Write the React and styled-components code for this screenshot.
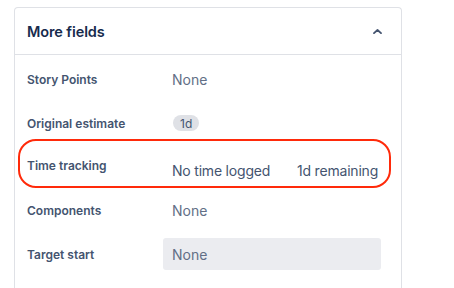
import React from "react";
import styled, { createGlobalStyle } from "styled-components";

const Global = createGlobalStyle`
  html, body { margin: 0; padding: 0; background: #ffffff; }
  body { font-family: Inter, "Noto Sans", "Liberation Sans", sans-serif; -webkit-font-smoothing: antialiased; }
`;

const Page = styled.div`
  padding: 7px 0 0 14px;
  height: 288px;
  box-sizing: border-box;
  overflow: hidden;
`;

const Card = styled.section`
  width: 388px;
  height: 300px;
  box-sizing: border-box;
  border: 1px solid #dfe1e6;
  border-bottom: none;
  border-radius: 4px 4px 0 0;
`;

const Header = styled.header`
  height: 46px;
  display: flex;
  align-items: center;
  justify-content: space-between;
  padding: 0 19px 0 12px;
  border-bottom: 1px solid #dfe1e6;
`;

const Title = styled.h2`
  margin: 0;
  font-size: 14.5px;
  font-weight: 600;
  color: #172b4d;
  letter-spacing: -0.1px;
`;

const Body = styled.div`
  display: flex;
  flex-direction: column;
  gap: 12px;
  padding: 8px 20px 0 12px;
`;

const Row = styled.div`
  position: relative;
  display: grid;
  grid-template-columns: 136px 218px;
  align-items: center;
  height: ${(p) => p.$h || 32}px;
`;

const Label = styled.div`
  font-size: 12px;
  font-weight: 600;
  color: #44546f;
  white-space: nowrap;
  align-self: ${(p) => (p.$top ? "start" : "center")};
  padding-top: ${(p) => (p.$top ? "7px" : "0")};
`;

const Value = styled.div`
  display: flex;
  align-items: center;
  padding-left: 9px;
  font-size: 14px;
  white-space: nowrap;
  color: ${(p) => (p.$muted ? "#626f86" : "#44546f")};
  height: 32px;
  box-sizing: border-box;
  border-radius: 3px;
  background: ${(p) => (p.$field ? "#ebecf0" : "transparent")};
  padding-top: ${(p) => (p.$low ? "6px" : "0")};
`;

const TimeCell = styled.span`
  width: ${(p) => p.$w || "auto"};
  letter-spacing: -0.2px;
`;

const Badge = styled.span`
  display: inline-flex;
  align-items: center;
  justify-content: center;
  height: 16px;
  padding: 0 7px;
  margin-left: 1px;
  border-radius: 8px;
  background: #dfe1e6;
  color: #44546f;
  font-size: 12px;
`;

const Highlight = styled.div`
  position: absolute;
  top: -12px;
  bottom: -6px;
  left: -9px;
  right: -10px;
  border: 2px solid #ff2a0a;
  border-radius: 18px;
  pointer-events: none;
`;

const Chevron = () => (
  <svg width="9" height="5" viewBox="0 0 9 5" fill="none">
    <polyline points="1,4.2 4.5,1 8,4.2" stroke="#44546f" strokeWidth="1.8" strokeLinecap="round" strokeLinejoin="round" />
  </svg>
);

export default function App() {
  return (
    <>
      <Global />
      <Page>
        <Card>
          <Header>
            <Title>More fields</Title>
            <Chevron />
          </Header>
          <Body>
            <Row>
              <Label>Story Points</Label>
              <Value $muted>None</Value>
            </Row>
            <Row>
              <Label>Original estimate</Label>
              <Value>
                <Badge>1d</Badge>
              </Value>
            </Row>
            <Row $h={31}>
              <Label $top>Time tracking</Label>
              <Value $low>
                <TimeCell $w="125px">No time logged</TimeCell>
                <TimeCell>1d remaining</TimeCell>
              </Value>
              <Highlight />
            </Row>
            <Row>
              <Label>Components</Label>
              <Value $muted>None</Value>
            </Row>
            <Row>
              <Label>Target start</Label>
              <Value $muted $field>None</Value>
            </Row>
          </Body>
        </Card>
      </Page>
    </>
  );
}
